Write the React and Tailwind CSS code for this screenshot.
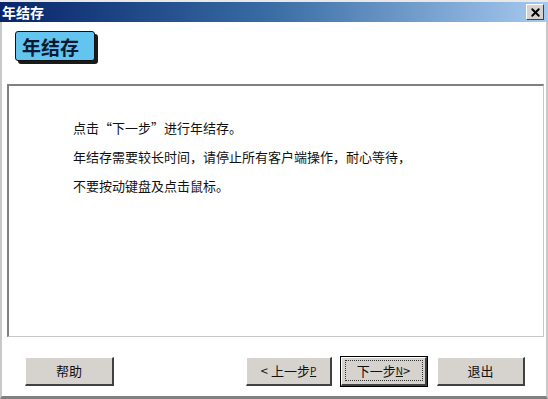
import { X } from "lucide-react";

const font = { fontFamily: '"Noto Sans CJK SC", "Noto Sans", sans-serif' };

function Btn({ children, focused, w = "w-[88px]" }) {
  return (
    <button
      className={`h-[29px] ${w} bg-[#d6d3ce] text-[13px] text-[#111] border-t border-l border-t-white border-l-white border-r-2 border-b-2 border-r-[#404040] border-b-[#404040] flex items-center justify-center ${
        focused ? "outline outline-1 outline-black" : ""
      }`}
    >
      {focused ? (
        <span className="border border-dotted border-[#333] w-[78px] h-[21px] flex items-center justify-center">
          {children}
        </span>
      ) : (
        children
      )}
    </button>
  );
}

export default function App() {
  return (
    <div
      className="w-[548px] h-[399px] bg-white flex flex-col overflow-hidden border-t-2 border-t-[#e8e8e8]"
      style={font}
    >
      <div className="h-[20px] flex items-center justify-between bg-gradient-to-r from-[#0a246a] via-[#3a6ea5] to-[#a6caf0] pl-[2px] pr-[4px]">
        <span className="text-white font-bold text-[14px] leading-none">年结存</span>
        <div className="w-[18px] h-[16px] bg-[#d6d3ce] border-t border-l border-white border-r border-b border-r-[#404040] border-b-[#404040] flex items-center justify-center">
          <X size={13} strokeWidth={3.5} className="text-black" />
        </div>
      </div>
      <div className="flex-1 flex flex-col border-l-2 border-l-[#c8c8c8] border-r-2 border-r-[#c8c8c8] border-b-[3px] border-b-[#808080] pl-[5px] pr-[2px]">
        <div className="h-[62px] pt-[9px] pl-[8px]">
          <div className="w-[80px] h-[30px] bg-[#62c4ef] border border-[#111] rounded-[3px] shadow-[3px_3px_0_#1a1a1a] flex items-center pl-[6px]">
            <span className="text-[19px] font-bold text-[#0b1a33] leading-none">年结存</span>
          </div>
        </div>
        <div className="h-[253px] border-t-2 border-l-2 border-t-[#808080] border-l-[#808080] border-r border-b border-r-[#c8c8c8] border-b-[#c8c8c8] bg-white pt-[33px] pl-[64px] text-[13px] text-[#111] flex flex-col gap-[11px] leading-[18px]">
          <p>点击“下一步”进行年结存。</p>
          <p>年结存需要较长时间，请停止所有客户端操作，耐心等待，</p>
          <p>不要按动键盘及点击鼠标。</p>
        </div>
        <div className="flex-1 flex items-center pl-[18px] pr-[19px] pt-[9px]">
          <Btn w="w-[89px]">帮助</Btn>
          <div className="flex-1" />
          <div className="flex">
            <Btn w="w-[86px]">&lt; 上一步<span className="underline text-[10px]">P</span></Btn>
            <span className="w-[9px]" />
            <Btn focused w="w-[86px]">下一步<span className="underline text-[10px]">N</span> &gt;</Btn>
            <span className="w-[10px]" />
            <Btn>退出</Btn>
          </div>
        </div>
      </div>
    </div>
  );
}
